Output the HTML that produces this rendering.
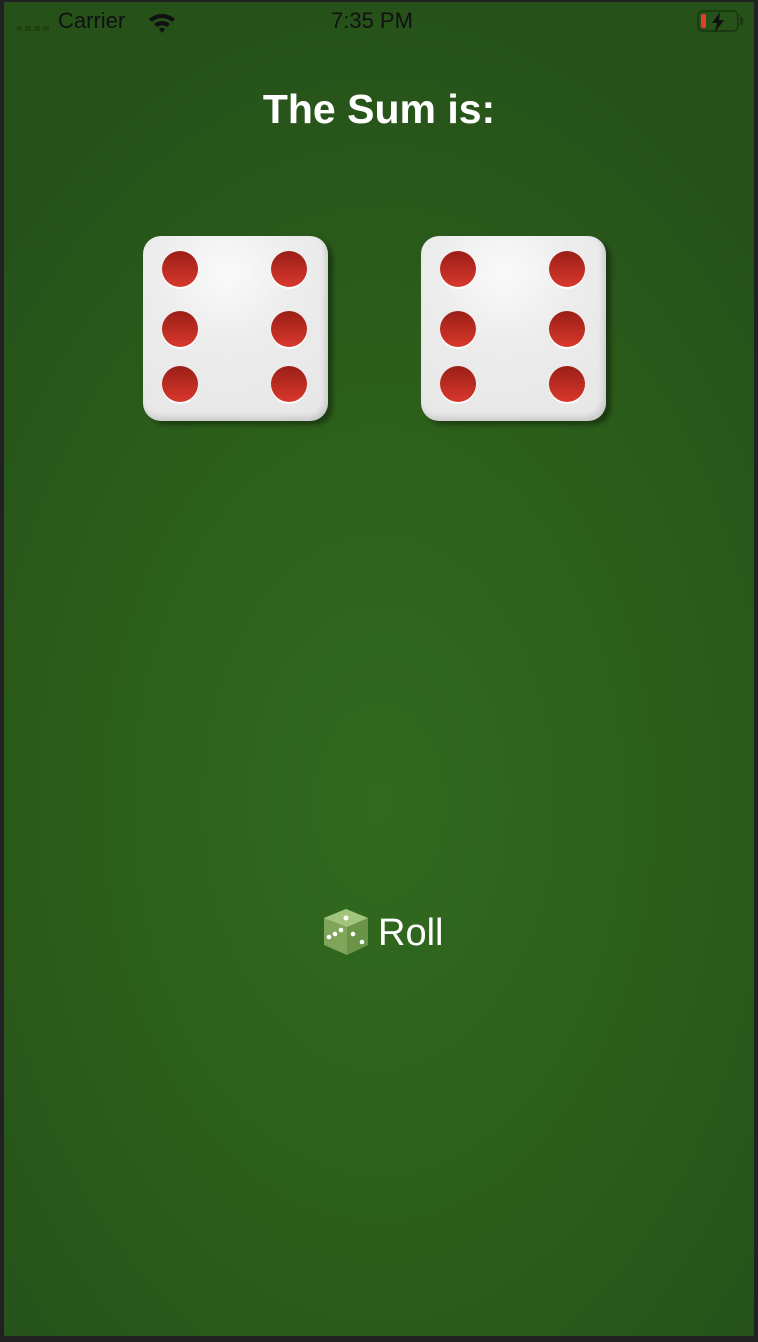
<!DOCTYPE html>
<html><head><style>
html,body{margin:0;padding:0;width:758px;height:1342px;background:#222;overflow:hidden;font-family:"Liberation Sans",sans-serif}
.scr{position:absolute;left:4px;top:2px;width:750px;height:1334px;background:radial-gradient(ellipse 70% 60% at 50% 60%,#316a1f 0%,#2c5e1a 55%,#26521a 100%)}
.sb{position:absolute;top:8px;font-size:22px;color:#111}
h1{position:absolute;top:86px;left:0;width:758px;text-align:center;margin:0;color:#fff;font-size:41px;font-weight:bold}
.die{position:absolute;top:236px;width:185px;height:185px;border-radius:18px;background:radial-gradient(circle at 45% 20%,#fafafa 0%,#ececec 40%,#e6e6e6 100%);box-shadow:5px 4px 4px rgba(0,0,0,.35),inset -3px -4px 6px rgba(0,0,0,.12)}
.pip{position:absolute;width:36px;height:36px;border-radius:50%;background:linear-gradient(#9a1e16,#d9382d);box-shadow:0 2px 0 #fff}
.roll{position:absolute;left:378px;top:912px;color:#fff;font-size:38px}
</style></head><body>
<div class="scr"></div>
<div style="position:absolute;left:16px;top:26px;width:34px;height:5px;background:repeating-linear-gradient(90deg,#1f4412 0 6px,transparent 6px 9px);border-radius:3px"></div>
<div class="sb" style="left:58px">Carrier</div>
<svg style="position:absolute;left:147px;top:12px" width="30" height="22" viewBox="0 0 30 22"><path d="M2 7a19 19 0 0 1 26 0l-3 3a15 15 0 0 0-20 0zM7 12a12 12 0 0 1 16 0l-3 3a8 8 0 0 0-10 0zM12 17a4 4 0 0 1 6 0l-3 4z" fill="#111"/></svg>
<div class="sb" style="left:331px">7:35 PM</div>
<div style="position:absolute;left:697px;top:10px;width:42px;height:22px;border:2px solid #1a3a10;border-radius:6px;box-sizing:border-box"></div>
<div style="position:absolute;left:740px;top:17px;width:3px;height:8px;background:#1a3a10;border-radius:0 2px 2px 0"></div>
<div style="position:absolute;left:701px;top:14px;width:5px;height:14px;background:#e0402a;border-radius:2px"></div>
<svg style="position:absolute;left:710px;top:12px" width="16" height="20" viewBox="0 0 16 20"><path d="M10 0L2 11h5l-2 9 9-12H9z" fill="#111"/></svg>
<h1>The Sum is:</h1>
<div class="die" style="left:143px">
<div class="pip" style="left:19px;top:15px"></div><div class="pip" style="left:128px;top:15px"></div>
<div class="pip" style="left:19px;top:75px"></div><div class="pip" style="left:128px;top:75px"></div>
<div class="pip" style="left:19px;top:130px"></div><div class="pip" style="left:128px;top:130px"></div>
</div>
<div class="die" style="left:421px">
<div class="pip" style="left:19px;top:15px"></div><div class="pip" style="left:128px;top:15px"></div>
<div class="pip" style="left:19px;top:75px"></div><div class="pip" style="left:128px;top:75px"></div>
<div class="pip" style="left:19px;top:130px"></div><div class="pip" style="left:128px;top:130px"></div>
</div>
<svg style="position:absolute;left:321px;top:907px" width="50" height="50" viewBox="0 0 50 50">
<path d="M25 2L47 11L47 38L26 48L3 38L3 11Z" fill="#7fa55a"/>
<path d="M3 11L25 2L47 11L26 20Z" fill="#a3c47c"/>
<path d="M26 20L47 11L47 38L26 48Z" fill="#6c9448"/>
<circle cx="25" cy="11" r="2.5" fill="#fff"/>
<circle cx="8" cy="30" r="2.3" fill="#fff"/><circle cx="14" cy="27" r="2.3" fill="#fff"/><circle cx="20" cy="23" r="2.3" fill="#fff"/>
<circle cx="32" cy="27" r="2.3" fill="#fff"/><circle cx="41" cy="35" r="2.3" fill="#fff"/>
</svg>
<div class="roll">Roll</div>
</body></html>
